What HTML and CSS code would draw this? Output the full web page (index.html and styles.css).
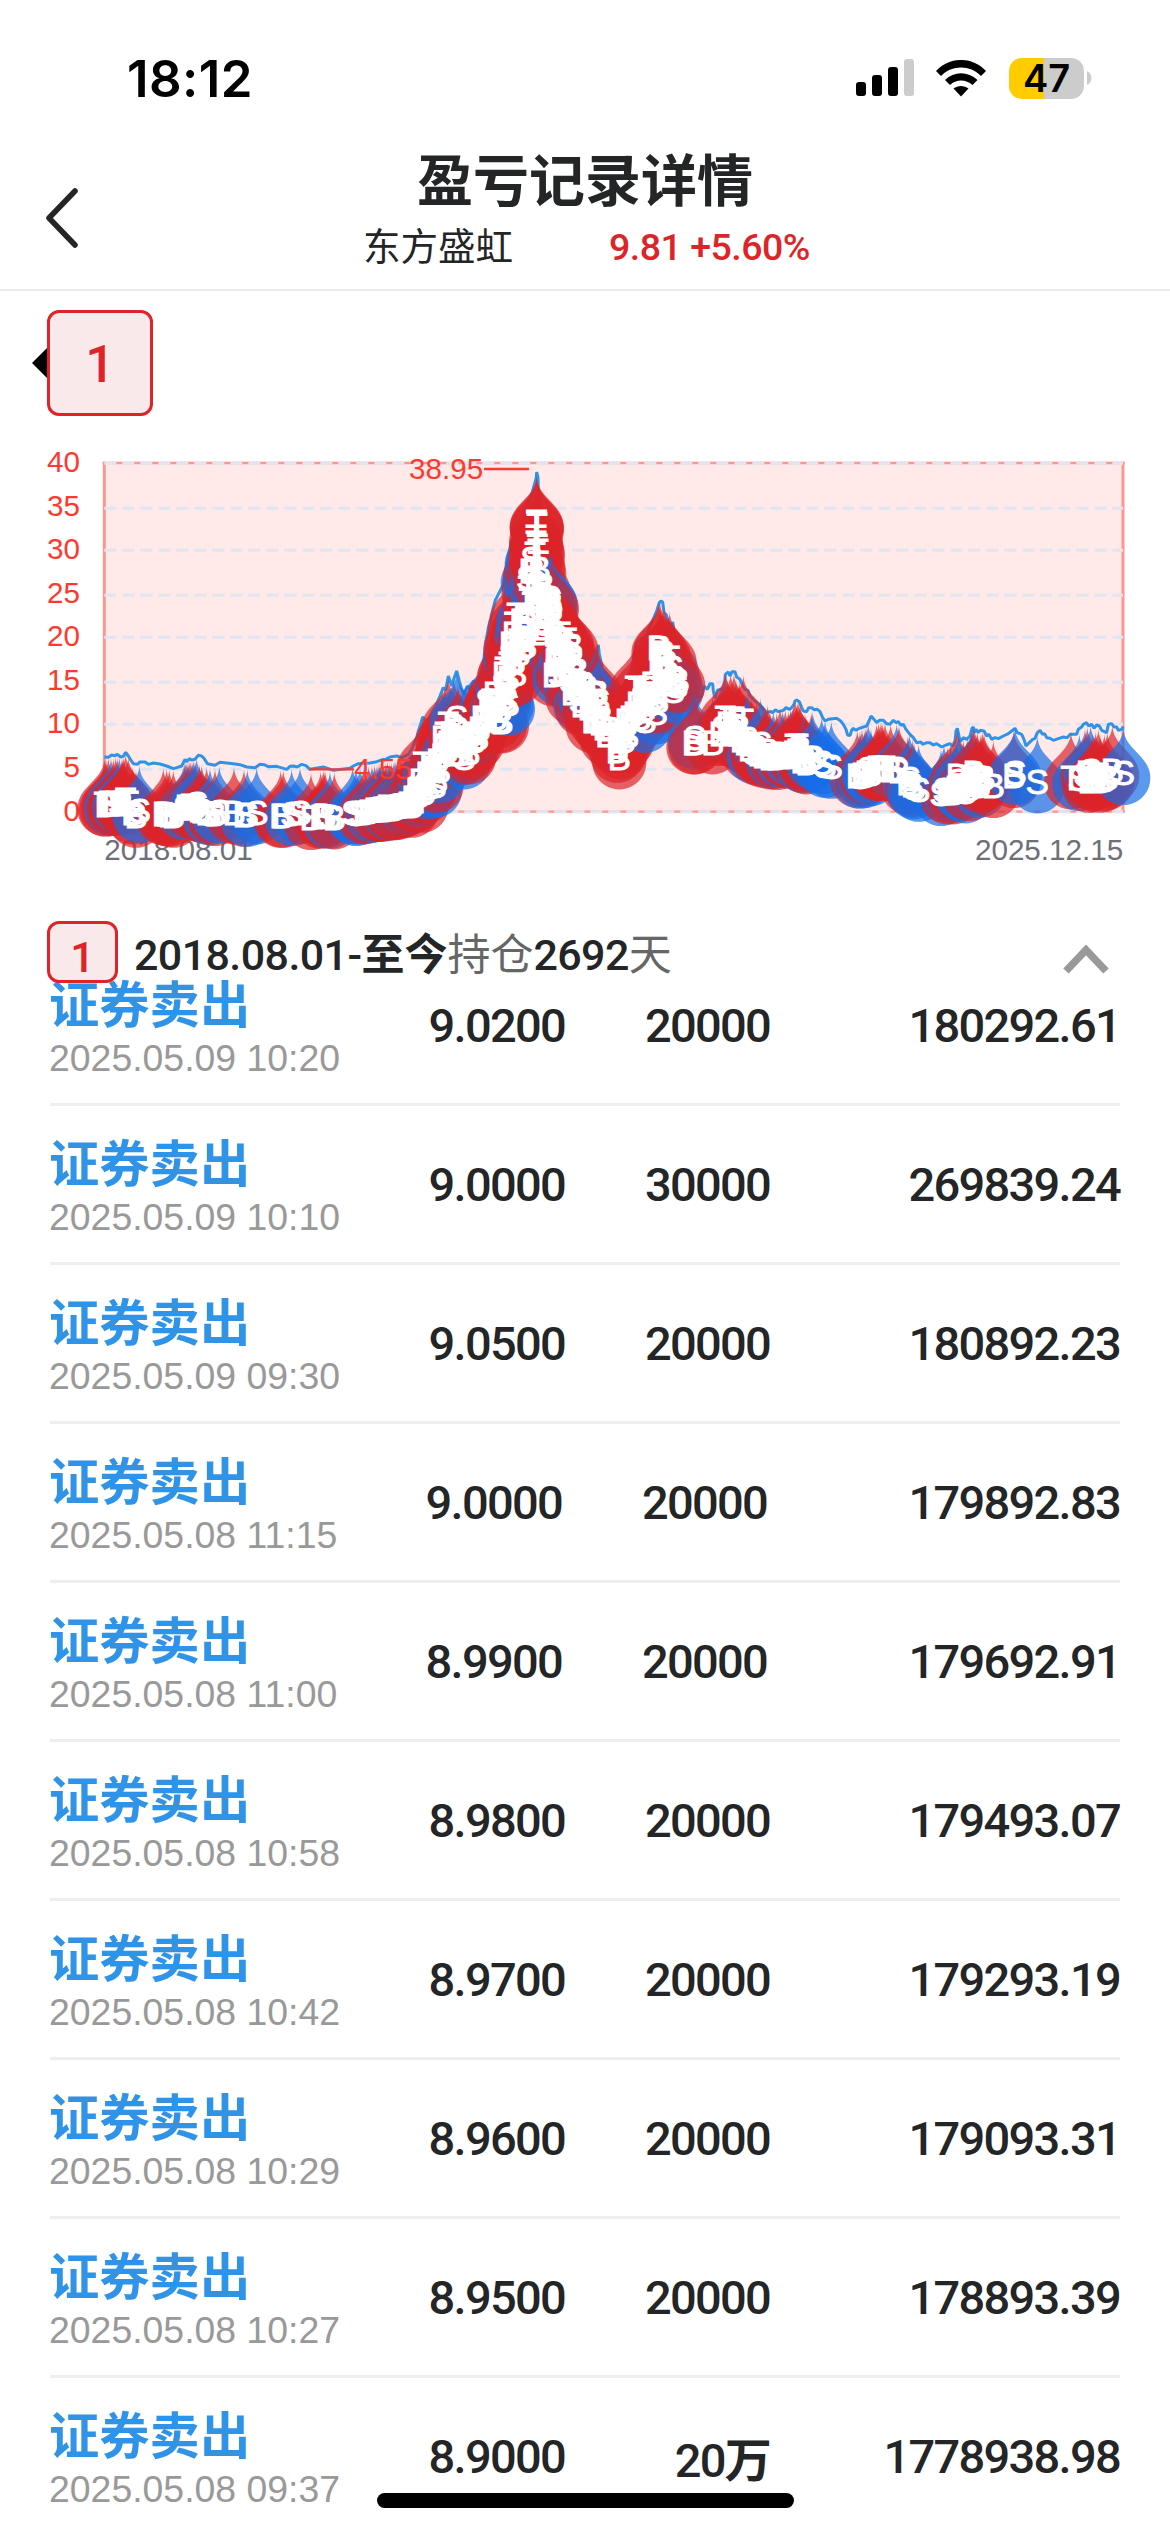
FILE: index.html
```html
<!DOCTYPE html>
<html lang="zh-CN">
<head>
    <meta charset="UTF-8">
    <meta name="viewport" content="width=device-width, initial-scale=1.0">
    <title>盈亏记录详情</title>
    <link rel="stylesheet" href="styles.css">
</head>
<body>
    <div class="page">
        <div class="status-bar">
            <span class="time">18:12</span>
            <div class="status-icons">
                <svg class="signal" width="58" height="38" viewBox="0 0 58 38">
                    <rect x="0" y="23" width="10" height="14" rx="3"/>
                    <rect x="16" y="16" width="10" height="21" rx="3"/>
                    <rect x="32" y="8" width="10" height="29" rx="3"/>
                    <rect class="off" x="48" y="0" width="10" height="37" rx="3"/>
                </svg>
                <svg class="wifi" width="50" height="37" viewBox="0 0 50 37">
                    <path d="M0 11C14-3.7 36-3.7 50 11L45 16C34 4.700 16 4.700 5 16Z"/>
                    <path d="M9 20C18 11 32 11 41.500 20L36.500 25C30 19 20 19 14 25Z"/>
                    <path d="M17.500 28.500C22 25 28 25 32.500 28.500L25 36.500Z"/>
                </svg>
                <div class="battery">47</div>
                <svg class="battery-tip" width="5" height="14" viewBox="0 0 5 14"><path d="M0 0C6 3 6 11 0 14Z"/></svg>
            </div>
        </div>

        <div class="nav">
            <svg class="back" width="36" height="60" viewBox="0 0 36 60">
                <path d="M31 3L5 30L31 57"/>
            </svg>
            <h1>盈亏记录详情</h1>
            <div class="stock">
                <span class="stock-name">东方盛虹</span>
                <span class="stock-price">9.81 +5.60%</span>
            </div>
        </div>

        <div class="periods">
            <svg class="pointer" width="15" height="30" viewBox="0 0 15 30"><path d="M15 0L0 15L15 30Z"/></svg>
            <div class="badge badge-big">1</div>
        </div>

        <svg class="chart" id="chart" width="1170" height="440" viewBox="0 0 3510 1320">
            <defs>
                <path id="pin" d="M0 0C0 56.700 -52.400 75.700 -73.200 119.600A81 81 0 1 0 73.200 119.600C52.400 75.700 0 56.700 0 0Z"/>
            </defs>
            <rect class="plot" x="313" y="62" width="3057" height="1055"/>
            <path class="edge-x" d="M308 66H3374M308 1112H3374"/>
            <path class="edge-y" d="M313 62V1115M3369 62V1115"/>
            <g id="grid"></g>
            <g id="axis"></g>
            <text class="date" x="313" y="1256">2018.08.01</text>
            <text class="date" x="3370" y="1256" text-anchor="end">2025.12.15</text>
            <polyline id="price"/>
            <g id="pins"></g>
            <g id="letters"></g>
            <path class="extreme" d="M1452 84H1587M928 985H1062"/>
            <text class="axis-text" x="1450" y="114" text-anchor="end">38.95</text>
            <text class="axis-text" x="1062" y="1013">4.55</text>
        </svg>

        <div class="group-head">
            <div class="badge badge-small">1</div>
            <div class="group-title">2018.08.01-<b>至今</b><i>持仓</i>2692<i>天</i></div>
            <svg class="caret" width="46" height="32" viewBox="0 0 46 32"><path d="M3 28L23 7L43 28"/></svg>
        </div>

        <div class="records">
            <div class="record">
                <div class="info"><div class="type">证券卖出</div><div class="when">2025.05.09 10:20</div></div>
                <div class="price">9.0200</div><div class="count">20000</div><div class="amount">180292.61</div>
            </div>
            <div class="record">
                <div class="info"><div class="type">证券卖出</div><div class="when">2025.05.09 10:10</div></div>
                <div class="price">9.0000</div><div class="count">30000</div><div class="amount">269839.24</div>
            </div>
            <div class="record">
                <div class="info"><div class="type">证券卖出</div><div class="when">2025.05.09 09:30</div></div>
                <div class="price">9.0500</div><div class="count">20000</div><div class="amount">180892.23</div>
            </div>
            <div class="record narrow">
                <div class="info"><div class="type">证券卖出</div><div class="when">2025.05.08 11:15</div></div>
                <div class="price">9.0000</div><div class="count">20000</div><div class="amount">179892.83</div>
            </div>
            <div class="record narrow">
                <div class="info"><div class="type">证券卖出</div><div class="when">2025.05.08 11:00</div></div>
                <div class="price">8.9900</div><div class="count">20000</div><div class="amount">179692.91</div>
            </div>
            <div class="record">
                <div class="info"><div class="type">证券卖出</div><div class="when">2025.05.08 10:58</div></div>
                <div class="price">8.9800</div><div class="count">20000</div><div class="amount">179493.07</div>
            </div>
            <div class="record">
                <div class="info"><div class="type">证券卖出</div><div class="when">2025.05.08 10:42</div></div>
                <div class="price">8.9700</div><div class="count">20000</div><div class="amount">179293.19</div>
            </div>
            <div class="record">
                <div class="info"><div class="type">证券卖出</div><div class="when">2025.05.08 10:29</div></div>
                <div class="price">8.9600</div><div class="count">20000</div><div class="amount">179093.31</div>
            </div>
            <div class="record">
                <div class="info"><div class="type">证券卖出</div><div class="when">2025.05.08 10:27</div></div>
                <div class="price">8.9500</div><div class="count">20000</div><div class="amount">178893.39</div>
            </div>
            <div class="record">
                <div class="info"><div class="type">证券卖出</div><div class="when">2025.05.08 09:37</div></div>
                <div class="price">8.9000</div><div class="count">20<b>万</b></div><div class="amount">1778938.98</div>
            </div>
        </div>

        <div class="home-bar"></div>
    </div>
    <script src="chart.js"></script>
</body>
</html>
```
FILE: styles.css
```css
body {
    margin: 0;
    background: #fff;
    color: #232526;
    font-family: Roboto, "Noto Sans CJK SC", sans-serif;
}

.page {
    position: relative;
    width: 1170px;
    height: 2532px;
    overflow: hidden;
    background: #fff;
}

.status-bar {
    display: flex;
    justify-content: space-between;
    align-items: center;
    height: 156px;
    padding: 0 79px 0 127px;
    box-sizing: border-box;
    color: #000;
}

.time {
    font-family: Inter, sans-serif;
    font-size: 51px;
    font-weight: 600;
    letter-spacing: 0.4px;
}

.status-icons {
    display: flex;
    align-items: center;
}

.signal .off {
    fill: #ccc;
}

.wifi {
    margin-left: 22px;
}

.battery {
    width: 75px;
    height: 41px;
    margin-left: 23px;
    border-radius: 13px;
    background: linear-gradient(to right, #ffcc00 35px, #ccc 35px);
    font: 600 38px/41px Inter, sans-serif;
    text-align: center;
}

.battery-tip {
    margin-left: 3px;
    margin-right: -1px;
    fill: #ccc;
}

.nav {
    position: relative;
    height: 133px;
    border-bottom: 2px solid #ebebeb;
    text-align: center;
}

.back {
    position: absolute;
    left: 44px;
    top: 32px;
    fill: none;
    stroke: #232526;
    stroke-width: 5.5;
    stroke-linecap: round;
    stroke-linejoin: round;
}

.nav h1 {
    margin: 0;
    font-size: 56px;
    font-weight: 700;
    line-height: 52px;
}

.stock {
    display: flex;
    align-items: center;
    margin-top: 14px;
    padding-left: 363px;
    line-height: 50px;
}

.stock-name {
    font-size: 37.5px;
}

.stock-price {
    margin-left: 96px;
    color: #dc2429;
    font-size: 37.5px;
    font-weight: 500;
    letter-spacing: -0.5px;
}

.periods {
    display: flex;
    align-items: center;
    height: 150px;
    padding: 0 0 7px 32px;
    box-sizing: border-box;
}

.badge {
    box-sizing: border-box;
    border: 3px solid #dc2429;
    border-radius: 12px;
    background: #fae9ea;
    color: #dc2429;
    font-weight: 500;
    text-align: center;
}

.badge-big {
    width: 106px;
    height: 106px;
    font-size: 52px;
    line-height: 103px;
}

.badge-small {
    width: 71px;
    height: 62px;
    font-size: 43px;
    line-height: 66px;
}

.chart {
    display: block;
    font-family: "Liberation Sans", Arial, sans-serif;
}

.plot {
    fill: #ffe9e9;
}

.edge-x {
    stroke: #ff958f;
    stroke-width: 7;
    fill: none;
}

.edge-y {
    stroke: #ff958f;
    stroke-width: 9;
}

.grid-line {
    stroke: #dfe6f2;
    stroke-width: 9;
    stroke-dasharray: 36 18;
}

.axis-text {
    fill: #fe3a30;
    font-size: 89px;
}

.date {
    fill: #6e7079;
    font-size: 89px;
}

#price {
    fill: none;
    stroke: #2f93e8;
    stroke-width: 9;
    stroke-linejoin: bevel;
}

.pin-red {
    fill: #dc2429;
    fill-opacity: 0.7;
}

.pin-blue {
    fill: #156ee8;
    fill-opacity: 0.7;
}

#letters {
    fill: #fff;
    stroke: #fff;
    stroke-width: 2.5;
    font-size: 106px;
    text-anchor: middle;
}

.extreme {
    stroke: #fe3a30;
    stroke-width: 7;
}

.group-head {
    position: relative;
    z-index: 1;
    display: flex;
    align-items: center;
    height: 62px;
    margin-top: 40px;
    padding: 0 61px 0 47px;
}

.group-title {
    flex: 1;
    padding: 0 0 3px 16px;
    font-size: 43px;
    font-weight: 500;
    letter-spacing: -0.6px;
    white-space: nowrap;
}

.group-title b,
.group-title i {
    font-style: normal;
    letter-spacing: 0;
}

.group-title i {
    color: #666;
    font-weight: 400;
}

.caret {
    margin-top: 14px;
    fill: none;
    stroke: #999;
    stroke-width: 7.5;
}

.records {
    margin: -36px 50px 0;
}

.record {
    display: flex;
    align-items: center;
    height: 156px;
    border-bottom: 3px solid #eee;
    font-size: 47px;
    font-weight: 500;
    letter-spacing: -1.7px;
    text-align: right;
}

.info {
    width: 292px;
    padding-top: 8px;
    text-align: left;
    letter-spacing: 0;
}

.narrow .info {
    width: 289px;
}

.type {
    margin-left: -1px;
    color: #2f93e8;
    font-size: 50.3px;
    font-weight: 700;
    line-height: 58px;
}

.when {
    margin-left: -1px;
    color: #999;
    font: 37.4px/46px "Liberation Sans", Arial, sans-serif;
    white-space: nowrap;
}

.price {
    width: 223px;
}

.count {
    width: 205px;
}

.amount {
    flex: 1;
}

.home-bar {
    position: absolute;
    left: 377px;
    top: 2493px;
    width: 417px;
    height: 15px;
    border-radius: 8px;
    background: #000;
}
```
FILE: chart.js
```javascript
const NS = 'http://www.w3.org/2000/svg';

// each part of the chart starts at its own x; line is "x,y", marks are "x,y,letter"
// B = buy, S = sell, T = both on one day
const parts = [
    {
        start: 0,
        line: `313,948 325,949 335,942 345,944 352,940 362,948 370,946 377,934 385,945 393,958 400,968 412,970 420,963 435,963
            445,970 460,966 480,969 500,975 520,983 530,980 545,975 555,955 560,962 568,953 575,957 585,955 595,943 605,945 612,952
            622,968 645,973 660,964 680,966 700,968 720,971 740,978 765,980 780,970 792,971 805,977 830,976 860,985 870,976
            880,975 892,978 905,970 918,974 930,985 970,978 1000,988 1050,982 1060,975 1075,968 1090,967 1110,966 1130,962 1150,955`,
        marks: `313,950,T 318,952,B 325,947,B 333,948,S 340,950,B 347,946,T 352,948,T 358,945,S 366,948,B 370,945,T 377,936,T
            385,945,T 398,975,B 408,985,B 418,970,S 490,978,B 500,980,B 508,982,B 520,985,B 553,962,S 558,958,B 564,960,S 570,955,B 576,960,B
            580,955,S 585,958,B 590,948,S 598,968,B 605,970,B 620,975,B 630,978,S 645,980,B 658,972,S 702,975,B 732,982,B 742,982,S
            770,975,S 842,985,B 850,985,B 875,980,S 900,975,S 933,992,B 962,988,B 970,985,B 975,985,B 990,988,S 1003,990,B
            1058,975,S 1068,980,S 1080,976,S 1092,975,B 1106,972,B 1116,970,S 1124,968,B 1131,968,S 1137,967,B`
    },
    {
        start: 1140,
        line: `10,958 30,948 50,945 65,950 85,940 95,925 105,900 110,890 115,870 122,850 128,828 135,836 145,838 155,815 165,800 180,765 190,740
            197,748 205,705 215,735 222,712 230,690 238,720 245,745 252,758 262,735 270,745 280,720 290,725 300,712 312,650 318,600 325,560 345,480
            370,430 385,340 395,300 420,270 440,200 455,160 469,110 470,93 474,110 475,150 490,280 500,330 512,340 530,400
            560,470 585,530 610,560 645,640 655,612 658,640 668,685 700,720 725,750 755,680 770,605 800,580 830,510 838,485 843,480 848,483
            852,515 858,520 865,540 873,560 878,543 884,580 895,610 910,650 920,755 930,770 938,752 948,762 957,770 965,765
            972,735 982,745 990,728 998,728 1000,750 1005,772 1012,748 1025,745 1033,740 1036,700 1045,693 1050,705 1056,692 1065,692 1070,708
            1080,715 1088,735 1095,745 1104,748 1110,765 1125,780 1135,788 1148,800 1160,815 1170,812`,
        marks: `0,967,B 5,960,S 10,965,T 16,966,B 22,958,B 28,963,S 34,962,B 40,963,B 45,955,S 50,962,T 56,958,B 62,952,S 66,955,B 72,955,B
            78,948,S 84,948,B 90,945,S 95,955,B 98,930,B 104,940,T 108,918,S 110,905,B 114,925,S 120,880,B 125,940,T 130,830,T 132,915,B
            136,890,S 140,860,B 145,900,S 150,850,S 155,880,T 160,840,B 165,895,S 170,880,B 172,820,B 178,850,S 185,805,B 187,750,B 190,775,B 195,740,T
            200,790,S 203,765,B 205,709,T 210,740,B 214,775,S 219,800,B 222,715,B 226,760,B 230,692,S 234,730,B 238,800,S 243,750,B 248,796,T
            252,810,S 256,770,B 262,755,S 267,795,B 272,780,T 277,740,B 283,760,B 288,735,S 293,750,B 298,725,B 306,690,B 312,700,B
            320,640,S 326,660,B 332,640,B 338,665,B 343,620,B 348,690,B 352,650,S 356,640,T 360,700,B 366,702,B 368,590,S 370,560,B 372,630,B
            375,545,T 378,600,B 380,640,S 384,650,S 385,570,B 387,530,T 390,500,S 391,470,B 394,480,B 397,520,B 400,440,B 403,510,T
            404,410,T 407,560,B 411,381,T 414,460,B 417,500,B 420,520,T 422,400,B 425,430,S 428,480,B 430,390,S 433,450,B 437,475,B 440,405,B
            443,270,S 445,300,T 448,336,T 450,250,B 452,280,S 455,215,S 457,350,T 460,250,B 462,340,B 465,200,T 467,290,S
            468,148,T 470,103,T 470,106,T 471,112,T 468,165,T 472,175,T 474,190,T 475,225,T 478,245,B 479,330,S 482,300,B 484,436,B 486,320,S 490,295,B 493,420,B 495,380,B
            499,410,S 503,340,B 506,375,S 509,330,S 511,360,S 513,338,S 516,350,B 519,400,B 520,561,B 523,440,B 525,520,B 528,500,S 532,530,B 535,450,B
            538,560,S 541,440,T 545,480,B 548,550,B 552,460,B 556,510,S 560,458,T 563,540,B 566,480,T 569,500,B 572,580,S 575,475,B 577,616,B
            580,520,B 583,560,S 588,600,B 592,550,B 597,610,B 601,640,S 606,651,B 611,590,B 616,620,S 622,600,B 627,660,B 633,640,B 638,701,B
            644,620,S 648,690,B 652,615,B 656,640,S 661,705,B 665,690,B 672,720,B 680,741,B 690,725,B 700,760,T 712,790,B
            718,810,B 722,780,T 726,740,B 732,760,B 738,700,B 743,745,B 750,690,B 756,720,T 762,680,B 766,601,T 772,650,B 776,605,T 780,690,B
            785,640,B 790,670,B 795,700,S 800,620,T 805,600,B 810,650,B 815,590,B 818,655,T 824,630,B 829,675,S 833,640,B
            835,482,B 837,520,B 876,540,S 880,610,S 840,480,B 842,500,B 845,530,B 849,555,B 852,495,B 856,585,T 860,525,B 865,560,B 869,510,T 873,590,B
            884,570,B 890,595,S 895,580,B 940,765,B 944,750,S 946,765,B 998,765,B 1020,740,B 1028,720,S 1036,692,T 1042,710,B
            1048,740,B 1052,695,T 1058,730,B 1062,695,T 1068,715,B 1073,740,B 1078,720,B 1084,758,B 1090,700,T 1096,765,B 1102,755,S 1108,785,B
            1115,770,B 1122,795,S 1130,780,B 1136,800,B 1142,770,S 1150,805,B 1155,801,B 1163,790,B`
    },
    {
        start: 2310,
        line: `0,810 8,815 16,806 25,812 40,808 48,800 58,805 65,800 72,790 75,780 80,777 88,782 95,800 100,810 110,812 116,800 125,800 132,806
            142,805 150,812 158,830 165,840 175,835 200,832 212,840 220,850 228,865 233,882 240,884 245,868 250,862 258,868 268,862 290,855 297,840
            303,825 312,835 320,845 328,838 340,838 350,848 360,850 370,838 378,845 385,842 392,852 400,850 408,865 420,880 430,890 440,905
            452,903 458,910 470,905 480,905 490,912 500,908 515,918 528,912 540,908 548,915 555,900 558,870 562,862 566,880 570,902
            580,890 590,895 600,885 606,862 610,858 614,875 618,865 625,875 630,868 642,870 650,885 657,880 665,895 675,890 685,893 700,885
            715,878 725,870 735,862 742,875 755,880 762,895 768,915 778,905 788,895 795,892 802,875 810,868 818,880 824,878 830,890
            840,892 850,898 865,893 880,888 892,890 900,880 920,880 925,865 935,858 940,850 950,845 956,855 965,850 972,862 980,852
            988,855 995,868 1010,875 1015,850 1025,848 1032,858 1040,858 1045,868 1055,865 1060,857`,
        marks: `0,810,B 10,808,S 20,812,B 30,798,B 38,805,S 46,803,B 55,808,B 62,800,S 70,795,B 75,775,T 80,790,B 84,776,T 90,785,B 95,819,B
            100,822,S 105,815,B 110,825,B 124,812,B 128,810,S 155,825,S 165,835,S 184,838,S 262,865,B 270,868,S 276,862,B 283,866,S 288,855,B 295,845,S
            303,860,S 320,845,B 326,842,T 333,840,B 338,845,B 345,842,T 362,846,B 380,845,S 387,850,B 413,885,B 418,875,S 427,893,B 432,900,S
            446,907,S 513,920,S 522,908,S 532,915,B 542,908,S 550,915,B 558,900,B 562,865,B 566,880,S 572,905,S 580,895,B 586,912,S
            592,890,S 598,905,B 604,870,B 608,858,S 612,855,B 617,890,B 622,870,B 628,895,S 632,880,B 637,870,B 642,872,B 670,896,B
            731,866,B 735,856,S 802,882,S 903,870,T 928,875,S 945,860,S 952,855,B 957,880,B 962,850,S 968,875,B 977,870,B 985,862,T
            990,880,B 1003,876,B 1012,870,B 1027,850,B 1060,857,S`
    }
];

function add(parent, tag, attrs, text) {
    let el = document.createElementNS(NS, tag);
    for (let key in attrs) {
        el.setAttribute(key, attrs[key]);
    }
    if (text) {
        el.textContent = text;
    }
    document.getElementById(parent).appendChild(el);
}

function split(data, start) {
    return data.trim().split(/\s+/).map(item => {
        let p = item.split(',');
        return [Number(p[0]) + start, Number(p[1]), p[2]];
    });
}

// y axis, 40 at the top
[67, 202, 328, 463, 589, 724, 850, 985, 1112].forEach((y, i) => {
    add('grid', 'path', { class: 'grid-line', d: `M313 ${y}H3369` });
    add('axis', 'text', { class: 'axis-text', x: 240, y: 93 + i * 130.700, 'text-anchor': 'end' }, String(40 - i * 5));
});

let points = [];
parts.forEach(part => {
    points = points.concat(split(part.line, part.start));
    split(part.marks, part.start).forEach(([x, y, letter]) => {
        add('pins', 'use', { href: '#pin', x: x, y: y, class: letter === 'S' ? 'pin-blue' : 'pin-red' });
        add('letters', 'text', { x: x, y: y + 176 }, letter);
    });
});
document.getElementById('price').setAttribute('points', points.map(p => p[0] + ',' + p[1]).join(' '));
```
